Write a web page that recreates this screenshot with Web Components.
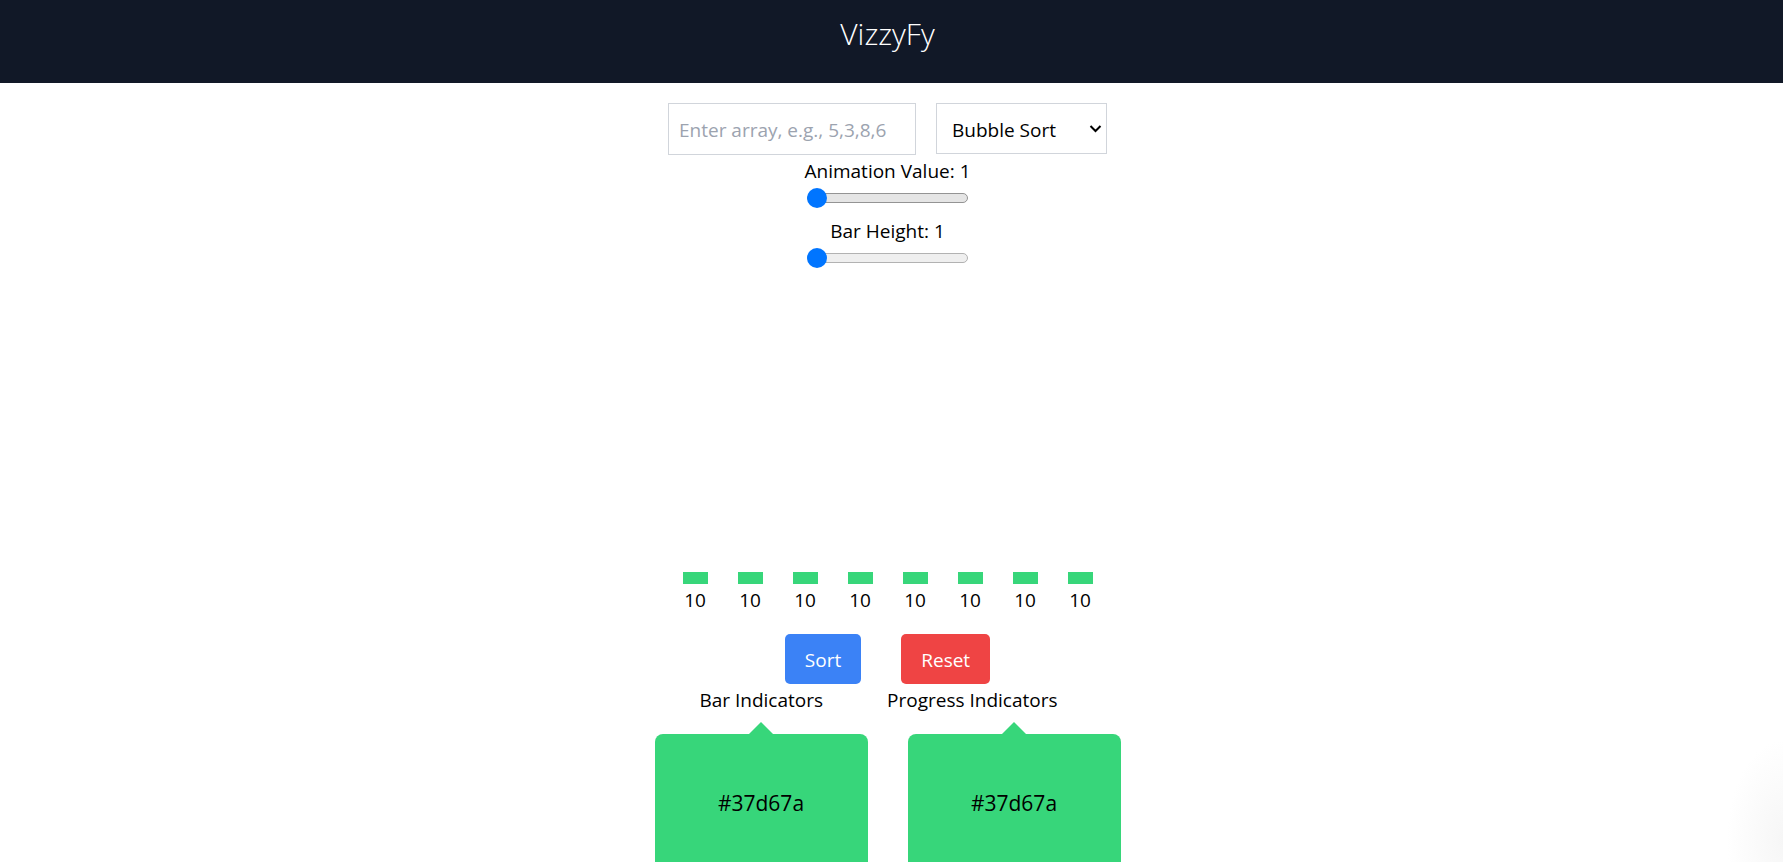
<!DOCTYPE html>
<html lang="en">
<head>
<meta charset="utf-8">
<meta name="viewport" content="width=device-width, initial-scale=1">
<title>VizzyFy</title>
<style>
html { scrollbar-width: none; }
body { margin: 0; background: #fff; color: #000; font: 19px/30px "Open Sans", "Noto Sans", sans-serif; }
</style>
</head>
<body>
<viz-app></viz-app>
<script>
class VizElement extends HTMLElement {
  constructor() {
    super();
    this.attachShadow({ mode: "open" }).innerHTML = this.render();
  }
  render() { return ""; }
}

customElements.define("viz-header", class extends VizElement {
  render() {
    return `<style>
      :host { display: block; background: #111827; color: #fff; text-align: center; padding: 14px 8px 29px 0; }
      h1 { margin: 0; font-size: 30px; line-height: 40px; font-weight: 300; }
    </style><header><h1><slot></slot></h1></header>`;
  }
});

customElements.define("viz-slider", class extends VizElement {
  render() {
    return `<style>
      :host { display: flex; flex-direction: column; align-items: center; height: 60px; }
      input { -webkit-appearance: none; appearance: none; display: block; width: 161px; height: 20px; margin: 2px 0 0; background: none; }
      input::-webkit-slider-runnable-track { box-sizing: border-box; height: 10px; border: 1px solid var(--track-border, #b2b2b2); border-radius: 5px; background: var(--track, #efefef); }
      input::-webkit-slider-thumb { -webkit-appearance: none; width: 20px; height: 20px; margin-top: -6px; margin-left: -1px; border-radius: 50%; background: #0075ff; }
    </style><label for="range"><slot></slot></label><input id="range" type="range" min="1" max="10" value="1">`;
  }
});

customElements.define("viz-controls", class extends VizElement {
  render() {
    return `<style>
      :host { display: flex; justify-content: center; align-items: flex-start; gap: 20px; }
      input, select { box-sizing: border-box; margin: 0; border: 1px solid #d1d5db; border-radius: 0; background: #fff; color: #000; font: inherit; }
      input { width: 248px; height: 52px; padding: 1px 10px 0; }
      input::placeholder { color: #9ca3af; opacity: 1; }
      .pick { display: grid; align-items: center; }
      .pick > * { grid-area: 1 / 1; }
      select { -webkit-appearance: none; appearance: none; width: 171px; height: 51px; padding: 2px 28px 0 15px; }
      svg { justify-self: end; margin-right: 5px; pointer-events: none; }
    </style>
    <input id="array" type="text" placeholder="Enter array, e.g., 5,3,8,6" aria-label="Array">
    <div class="pick">
      <select aria-label="Algorithm"><option>Bubble Sort</option><option>Selection Sort</option><option>Insertion Sort</option></select>
      <svg width="13" height="10" viewBox="0 0 13 10" fill="none" stroke="#000" stroke-width="2"><path d="M1.5 2l5 5 5-5"/></svg>
    </div>`;
  }
});

customElements.define("viz-bar", class extends VizElement {
  render() {
    return `<style>
      :host { display: flex; flex-direction: column; align-items: center; width: 25px; }
      i { width: 25px; height: 12px; background: #37d67a; }
      span { padding-top: 1px; }
    </style><i></i><span><slot></slot></span>`;
  }
});

customElements.define("viz-button", class extends VizElement {
  render() {
    return `<style>
      :host { display: block; }
      button { display: block; height: 50px; padding: 2px 20px 0; border: 0; border-radius: 5px; background: var(--fill); color: #fff; font: inherit; cursor: pointer; }
    </style><button type="button"><slot></slot></button>`;
  }
});

customElements.define("viz-swatch", class extends VizElement {
  render() {
    return `<style>
      :host { display: flex; flex-direction: column; width: 213px; }
      .arrow { align-self: center; width: 0; margin-top: 7px; border: solid transparent; border-width: 0 12px 12px; border-bottom-color: #37d67a; }
      .card { display: flex; align-items: center; justify-content: center; height: 138px; border-radius: 8px 8px 0 0; background: #37d67a; font-size: 21px; }
    </style><div class="arrow"></div><div class="card"><slot></slot></div>`;
  }
});

customElements.define("viz-app", class extends VizElement {
  render() {
    return `<style>
      :host { display: block; min-height: 100vh; background: radial-gradient(ellipse 56px 100px at 100% 840px, #f6f6f6, #fff); }
      main { display: block; padding: 20px 8px 0 0; }
      .sliders { padding-top: 1px; }
      viz-slider:first-child { --track: #e5e5e5; --track-border: #949494; }
      .bars { display: flex; justify-content: center; align-items: flex-end; gap: 30px; height: 339px; }
      .actions { display: flex; justify-content: center; gap: 40px; padding-top: 19px; }
      .labels { display: flex; justify-content: center; gap: 64px; padding: 1px 18px 0 0; }
      .swatches { display: flex; justify-content: center; gap: 40px; }
    </style>
    <viz-header>VizzyFy</viz-header>
    <main>
      <viz-controls></viz-controls>
      <div class="sliders"><viz-slider>Animation Value: 1</viz-slider><viz-slider>Bar Height: 1</viz-slider></div>
      <div class="bars">${"<viz-bar>10</viz-bar>".repeat(8)}</div>
      <div class="actions"><viz-button style="--fill:#3b82f6">Sort</viz-button><viz-button style="--fill:#ef4444">Reset</viz-button></div>
      <div class="labels"><span>Bar Indicators</span><span>Progress Indicators</span></div>
      <div class="swatches"><viz-swatch>#37d67a</viz-swatch><viz-swatch>#37d67a</viz-swatch></div>
    </main>`;
  }
});
</script>
</body>
</html>
